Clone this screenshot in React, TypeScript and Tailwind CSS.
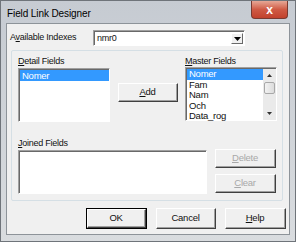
import React from "react";

const font = { fontFamily: '"Liberation Sans", Arial, sans-serif' };

function Btn({ children, w, h = "h-[19px]", disabled, def }: { children: React.ReactNode; w: string; h?: string; disabled?: boolean; def?: boolean }) {
  return (
    <div className={`${w} ${h} ${def ? "border border-black" : ""} flex`}>
      <div className="flex flex-1 border-t border-l border-white border-r border-b border-r-[#404040] border-b-[#404040] bg-[#f0f0f0]">
        <div className={`flex flex-1 items-center justify-center border-r border-b border-[#a0a0a0] text-[9.5px] ${disabled ? "text-[#a8a8a8]" : "text-[#111]"}`}>
          {children}
        </div>
      </div>
    </div>
  );
}

function Sunken({ className, children }: { className: string; children?: React.ReactNode }) {
  return (
    <div className={`${className} flex border-t border-l border-[#a0a0a0] border-r border-b border-r-white border-b-white`}>
      <div className="flex flex-1 border-t border-l border-[#696969] bg-white">{children}</div>
    </div>
  );
}

export default function App() {
  return (
    <div style={font} className="flex h-[242px] w-[296px] flex-col border border-[#6f747a] bg-gradient-to-b from-[#c6cbd2] to-[#d9dcdf] tracking-[-0.25px]">
      {/* Titelleiste */}
      <div className="flex h-[22px] items-start">
        <div className="ml-[6px] mt-[6px] text-[10px] leading-[13px] tracking-[-0.1px] text-black">Field Link Designer</div>
        <div className="ml-auto mr-[7px] flex h-[18px] w-[37px] items-center justify-center rounded-b-[4px] border border-t-0 border-[#7a3a30] bg-gradient-to-b from-[#e6a796] via-[#cf5a44] to-[#c2412c] text-[12px] font-bold leading-none text-white">
          x
        </div>
      </div>

      {/* Client-Bereich */}
      <div className="mx-[5px] mb-[6px] flex flex-1 flex-col border border-[#8d9399] bg-[#f0f0f0] px-[3px] text-[9px] text-[#111]">
        <div className="mt-[6px] flex h-[16px] items-center">
          <span className="ml-[0px] w-[83px]">
            A<u>v</u>ailable Indexes
          </span>
          <Sunken className="h-[16px] w-[152px]">
            <div className="flex flex-1 items-center pl-[2px]">nmr0</div>
            <div className="my-[1px] mr-[1px] flex w-[12px] items-center justify-center border border-t-white border-l-white border-r-[#696969] border-b-[#696969] bg-[#f0f0f0]">
              <svg width="7" height="4" viewBox="0 0 7 4"><path d="M0 0h7L3.5 4z" fill="#000" /></svg>
            </div>
          </Sunken>
        </div>

        {/* Gruppenrahmen */}
        <div className="ml-[1px] mt-[4px] flex h-[151px] w-[272px] flex-col rounded-[2px] border border-[#d5dfe5] px-[6px]">
          <div className="mt-[4px] flex">
            <div className="flex w-[92px] flex-col">
              <span className="h-[13px] leading-[13px]">
                <u>D</u>etail Fields
              </span>
              <Sunken className="h-[54px] w-[92px]">
                <div className="flex flex-1 flex-col">
                  <div className="h-[11px] bg-[#3399ff] pl-[2px] text-[9.5px] leading-[11px] text-white">Nomer</div>
                </div>
              </Sunken>
            </div>
            <div className="ml-[8px] mt-[28px]">
              <Btn w="w-[60px]">
                <u>A</u>dd
              </Btn>
            </div>
            <div className="ml-[7px] flex w-[92px] flex-col">
              <span className="h-[12px] leading-[12px]">
                <u>M</u>aster Fields
              </span>
              <Sunken className="h-[54px] w-[92px]">
                <div className="flex flex-1 flex-col text-[9.5px] leading-[10.6px]">
                  <div className="bg-[#3399ff] pl-[2px] text-white">Nomer</div>
                  <div className="pl-[2px]">Fam</div>
                  <div className="pl-[2px]">Nam</div>
                  <div className="pl-[2px]">Och</div>
                  <div className="pl-[2px]">Data_rog</div>
                </div>
                <div className="flex w-[13px] flex-col bg-[#eaeaea]">
                  <div className="flex h-[13px] items-center justify-center">
                    <svg width="5" height="3" viewBox="0 0 5 3"><path d="M0 3h5L2.5 0z" fill="#333" /></svg>
                  </div>
                  <div className="mx-[1px] h-[12px] rounded-[2px] border border-[#a8a8a8] bg-gradient-to-r from-[#f2f2f2] to-[#dcdcdc]" />
                  <div className="flex-1" />
                  <div className="flex h-[13px] items-center justify-center">
                    <svg width="5" height="3" viewBox="0 0 5 3"><path d="M0 0h5L2.5 3z" fill="#333" /></svg>
                  </div>
                </div>
              </Sunken>
            </div>
          </div>

          <span className="mt-[15px] h-[13px] leading-[13px]">
            <u>J</u>oined Fields
          </span>
          <div className="flex">
            <Sunken className="h-[44px] w-[192px]" />
            <div className="ml-[8px] mt-[-1px] flex flex-col gap-[6px]">
              <Btn w="w-[61px]" disabled>
                <u>D</u>elete
              </Btn>
              <Btn w="w-[61px]" disabled>
                <u>C</u>lear
              </Btn>
            </div>
          </div>
        </div>

        {/* Dialogschaltflächen */}
        <div className="mt-[7px] flex gap-[9px] pl-[76px]">
          <Btn w="w-[61px]" h="h-[21px]" def>
            OK
          </Btn>
          <Btn w="w-[60px]" h="h-[21px]">
            Cancel
          </Btn>
          <Btn w="w-[61px]" h="h-[21px]">
            <u>H</u>elp
          </Btn>
        </div>
      </div>
    </div>
  );
}
